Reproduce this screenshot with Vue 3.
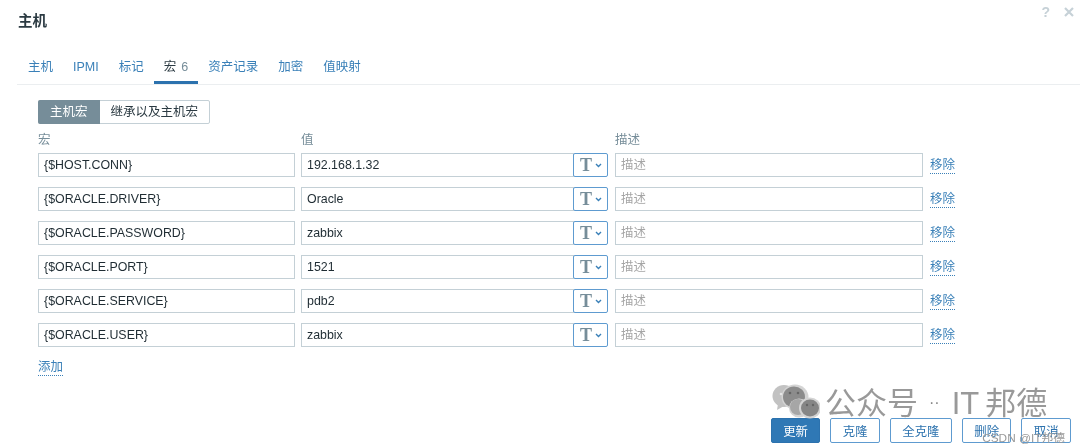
<script setup>
const tabs = [
  { label: '主机' },
  { label: 'IPMI' },
  { label: '标记' },
  { label: '宏', count: 6, active: true },
  { label: '资产记录' },
  { label: '加密' },
  { label: '值映射' }
]
const rows = [
  ['{$HOST.CONN}', '192.168.1.32'],
  ['{$ORACLE.DRIVER}', 'Oracle'],
  ['{$ORACLE.PASSWORD}', 'zabbix'],
  ['{$ORACLE.PORT}', '1521'],
  ['{$ORACLE.SERVICE}', 'pdb2'],
  ['{$ORACLE.USER}', 'zabbix']
]
const buttons = ['克隆', '全克隆', '删除', '取消']
</script>

<template>
  <div class="dialog">
    <header class="head">
      <h1>主机</h1>
      <div class="head-icons">
        <span class="help">?</span>
        <svg class="close" width="10" height="10" viewBox="0 0 10 10"><path d="M1 1l8 8M9 1l-8 8" /></svg>
      </div>
    </header>
    <nav class="tabs">
      <a v-for="t in tabs" :key="t.label" class="tab" :class="{ active: t.active }">
        {{ t.label }}<span v-if="t.count" class="count">{{ t.count }}</span>
      </a>
    </nav>
    <section class="body">
      <div class="switch">
        <span class="seg on">主机宏</span>
        <span class="seg">继承以及主机宏</span>
      </div>
      <div class="grid labels">
        <span>宏</span>
        <span>值</span>
        <span>描述</span>
      </div>
      <div v-for="r in rows" :key="r[0]" class="grid row">
        <div class="field">{{ r[0] }}</div>
        <div class="value">
          <div class="field joined">{{ r[1] }}</div>
          <div class="type">
            <span class="t">T</span>
            <svg width="7" height="5" viewBox="0 0 7 5"><path d="M1 1l2.5 2.5L6 1" /></svg>
          </div>
        </div>
        <div class="field ph">描述</div>
        <a class="link remove">移除</a>
      </div>
      <a class="link add">添加</a>
    </section>
    <footer class="foot">
      <button class="btn primary">更新</button>
      <button v-for="b in buttons" :key="b" class="btn">{{ b }}</button>
    </footer>
    <div class="mark">
      <svg class="wechat" width="52" height="40" viewBox="0 0 52 40">
        <ellipse cx="16" cy="16" rx="11.5" ry="11" fill="#c2c2c2" />
        <path d="M10 24l-1 6 7-4z" fill="#c2c2c2" />
        <ellipse cx="27" cy="17" rx="13.5" ry="12.5" fill="#d4d4d4" />
        <ellipse cx="26" cy="17" rx="11" ry="10.5" fill="#8c8c8c" />
        <ellipse cx="31" cy="28" rx="10" ry="9.5" fill="#d4d4d4" />
        <ellipse cx="30" cy="27" rx="8" ry="8" fill="#a6a6a6" />
        <ellipse cx="42" cy="28" rx="11" ry="10.5" fill="#d4d4d4" />
        <ellipse cx="42" cy="28" rx="9" ry="8.5" fill="#868686" />
        <circle cx="13" cy="14" r="1.3" fill="#e6e6e6" />
        <circle cx="22" cy="13" r="1.3" fill="#666" />
        <circle cx="30" cy="13" r="1.3" fill="#666" />
        <circle cx="39" cy="25" r="1.2" fill="#666" />
        <circle cx="45" cy="25" r="1.2" fill="#666" />
      </svg>
      <span class="mark-text">公众号<span class="dot">··</span>IT 邦德</span>
    </div>
    <div class="csdn">CSDN @IT邦德</div>
  </div>
</template>

<style scoped>
.dialog {
  position: relative;
  width: 1080px;
  height: 447px;
  overflow: hidden;
  background: #fff;
  box-sizing: border-box;
  padding: 0 0 0 17px;
  font-family: "Liberation Sans", "Noto Sans CJK SC", sans-serif;
  font-size: 12.4px;
  color: #1f2c33;
  filter: blur(0.45px);
}
.head {
  display: flex;
  justify-content: space-between;
  height: 54px;
  padding-top: 12px;
  box-sizing: border-box;
}
h1 {
  margin: 0;
  padding-left: 1px;
  font-size: 14.5px;
  line-height: 18px;
  font-weight: 700;
  color: #2b3a42;
}
.head-icons {
  display: flex;
  gap: 14px;
  align-items: flex-start;
  padding-right: 6px;
  margin-top: -7px;
}
.help {
  font-size: 14px;
  font-weight: 700;
  line-height: 14px;
  color: #c6d1d7;
}
.close {
  margin-top: 2px;
}
.close path {
  stroke: #c6d1d7;
  stroke-width: 2.2;
  fill: none;
}
.tabs {
  display: flex;
  width: 1063px;
  height: 30px;
  border-bottom: 1px solid #ebeef0;
}
.tab {
  padding: 0 10px;
  height: 30px;
  box-sizing: border-box;
  line-height: 27px;
  font-size: 12.5px;
  color: #3a80b8;
  white-space: nowrap;
}
.tab:first-child {
  padding-left: 11px;
}
.tab.active {
  color: #2b3a42;
  border-bottom: 3px solid #2c72ae;
}
.count {
  margin-left: 5px;
  color: #768d99;
}
.body {
  padding: 15px 0 0 21px;
}
.switch {
  display: inline-flex;
  height: 24px;
  border: 1px solid #c4d0d6;
  border-radius: 2px;
  box-sizing: border-box;
  vertical-align: top;
}
.seg {
  padding: 0 11px;
  line-height: 22px;
  font-size: 12.5px;
  color: #2b3a42;
}
.seg.on {
  background: #768d99;
  color: #fff;
  padding: 0 12px;
  margin: -1px 0 -1px -1px;
  line-height: 24px;
  border-radius: 2px 0 0 2px;
}
.grid {
  display: grid;
  grid-template-columns: 257px 308px 308px auto;
  column-gap: 6px;
  align-items: center;
}
.labels {
  height: 21px;
  margin-top: 3px;
  color: #768d99;
  line-height: 26px;
  font-size: 12.5px;
}
.row {
  height: 24px;
  margin-top: 10px;
}
.labels + .row {
  margin-top: 5px;
}
.field {
  height: 24px;
  line-height: 22px;
  padding: 0 5px;
  border: 1px solid #c4d0d6;
  box-sizing: border-box;
  background: #fff;
  color: #1f2c33;
  font-size: 12.4px;
  min-width: 0;
}
.ph {
  color: #a5a5a5;
}
.value {
  display: flex;
  padding-right: 1px;
}
.joined {
  flex: 1;
}
.type {
  display: flex;
  align-items: center;
  gap: 3px;
  width: 35px;
  height: 24px;
  margin-left: -1px;
  padding-left: 6px;
  box-sizing: border-box;
  border: 1px solid #5e9bd0;
  border-radius: 2px;
  background: #fff;
}
.t {
  font-family: "Liberation Serif", serif;
  font-weight: 700;
  font-size: 18px;
  line-height: 20px;
  color: #768d99;
}
.type svg path {
  stroke: #3a80b8;
  stroke-width: 1.4;
  fill: none;
}
.link {
  color: #3a80b8;
  font-size: 12.5px;
  line-height: 15px;
  border-bottom: 1px dotted #3a80b8;
  justify-self: start;
}
.remove {
  margin: 2px 0 0 1px;
}
.add {
  display: inline-block;
  margin-top: 13px;
}
.foot {
  position: absolute;
  right: 9px;
  bottom: 4px;
  display: flex;
  gap: 10px;
}
.btn {
  height: 25px;
  padding: 0 11.4px;
  box-sizing: border-box;
  background: #fff;
  border: 1px solid #5e9bd0;
  border-radius: 2px;
  color: #2c72ae;
  font: inherit;
  font-size: 12.4px;
}
.primary {
  background: #2f78b5;
  color: #fff;
  border-color: #2c72ae;
}
.mark {
  position: absolute;
  left: 768px;
  top: 380px;
  display: flex;
  gap: 5px;
  pointer-events: none;
}
.wechat {
  flex: none;
}
.mark-text {
  font-size: 31px;
  line-height: 46px;
  color: #999;
  white-space: nowrap;
  word-spacing: -2px;
}
.dot {
  font-size: 16px;
  margin: 0 12px 0 11px;
  vertical-align: 6px;
  color: #888;
}
.csdn {
  position: absolute;
  right: 15px;
  top: 431px;
  font-size: 11.8px;
  line-height: 14px;
  color: #999;
}
</style>
